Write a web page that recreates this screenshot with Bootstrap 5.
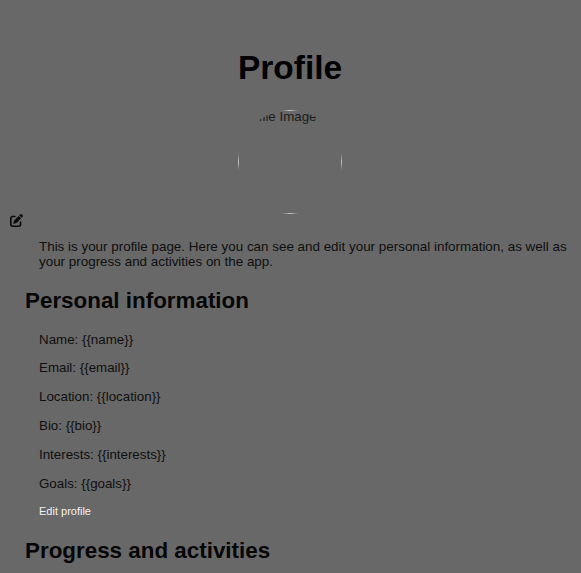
<!DOCTYPE html>
<html lang="en">
<head>
<meta charset="utf-8">
<title>Profile</title>
<link href="https://cdn.jsdelivr.net/npm/bootstrap@5.3.0/dist/css/bootstrap.min.css" rel="stylesheet">
<style>
html, body { height: 100%; overflow: hidden; }
body { background: #686868; color: #0f0f0f; font-family: "Liberation Sans", Arial, sans-serif; font-size: 13.33px; line-height: 15.33px; }
.page-wrap { padding: 0 15px 0 14px; }
.page-title { font-size: 33.5px; font-weight: 700; color: #000; line-height: 38px; margin: 49px 0 23px; font-family: inherit; }
.avatar-ring { position: relative; width: 104px; height: 104px; font-size: 13.33px; line-height: 13px; color: #1c1c1c; overflow: hidden; }
.avatar-ring svg { position: absolute; inset: 0; }
.edit-mark { display: block; margin: 0 0 12px -4px; padding: 0; height: 13px; line-height: 0; border: 0; background: none; }
.intro { margin: 0 -6px 18.5px 25px; font-size: 13.42px; }
.sect { font-size: 22.4px; font-weight: 700; color: #050505; line-height: 26px; margin: 0 0 17.5px 11px; font-family: inherit; }
.info { margin: 0 0 13.5px 25px; }
.edit-btn { display: block; margin: -1px 0 19px 25px; padding: 0; border: 0; background: none; color: #f2f2f2; font-size: 11px; line-height: 15px; border-radius: 0; }
.edit-btn:hover { color: #fff; }
</style>
</head>
<body>
<main class="page-wrap">
  <h1 class="page-title text-center">Profile</h1>
  <div class="avatar-ring rounded-circle mx-auto">Profile Image
    <svg width="104" height="104" viewBox="0 0 104 104" fill="none">
      <defs>
        <linearGradient id="fadeH" x1="0" x2="1" y1="0" y2="0"><stop offset="0" stop-color="#c8c8c8" stop-opacity="0"/><stop offset=".5" stop-color="#c8c8c8"/><stop offset="1" stop-color="#c8c8c8" stop-opacity="0"/></linearGradient>
        <linearGradient id="fadeV" x1="0" x2="0" y1="0" y2="1"><stop offset="0" stop-color="#c8c8c8" stop-opacity="0"/><stop offset=".5" stop-color="#c8c8c8"/><stop offset="1" stop-color="#c8c8c8" stop-opacity="0"/></linearGradient>
      </defs>
      <rect x="42" y="0" width="20" height="1" fill="url(#fadeH)"/>
      <rect x="42" y="103" width="20" height="1" fill="url(#fadeH)"/>
      <rect x="0" y="42" width="1" height="20" fill="url(#fadeV)"/>
      <rect x="103" y="42" width="1" height="20" fill="url(#fadeV)"/>
    </svg>
  </div>
  <button class="edit-mark" type="button" aria-label="Edit">
    <svg width="13" height="13" viewBox="0 0 512 512" fill="#0b0b0b"><path d="M471.6 21.7c-21.9-21.9-57.3-21.9-79.2 0L362.3 51.7l97.9 97.9 30.1-30.1c21.9-21.9 21.9-57.3 0-79.2L471.6 21.7zm-299.2 220c-6.1 6.1-10.8 13.6-13.5 21.9l-29.6 88.8c-2.9 8.6-.6 18.1 5.8 24.6s15.9 8.7 24.6 5.8l88.8-29.6c8.2-2.7 15.7-7.4 21.9-13.5L437.7 172.3 339.7 74.3 172.4 241.7zM96 64C43 64 0 107 0 160V416c0 53 43 96 96 96H352c53 0 96-43 96-96V320c0-17.7-14.3-32-32-32s-32 14.3-32 32v96c0 17.7-14.3 32-32 32H96c-17.7 0-32-14.3-32-32V160c0-17.7 14.3-32 32-32h96c17.7 0 32-14.3 32-32s-14.3-32-32-32H96z"/></svg>
  </button>
  <p class="intro">This is your profile page. Here you can see and edit your personal information, as well as your progress and activities on the app.</p>
  <h2 class="sect">Personal information</h2>
  <p class="info">Name: {{name}}</p>
  <p class="info">Email: {{email}}</p>
  <p class="info">Location: {{location}}</p>
  <p class="info">Bio: {{bio}}</p>
  <p class="info">Interests: {{interests}}</p>
  <p class="info">Goals: {{goals}}</p>
  <button class="edit-btn btn" type="button">Edit profile</button>
  <h2 class="sect">Progress and activities</h2>
</main>
<script src="https://cdn.jsdelivr.net/npm/bootstrap@5.3.0/dist/js/bootstrap.bundle.min.js"></script>
</body>
</html>
